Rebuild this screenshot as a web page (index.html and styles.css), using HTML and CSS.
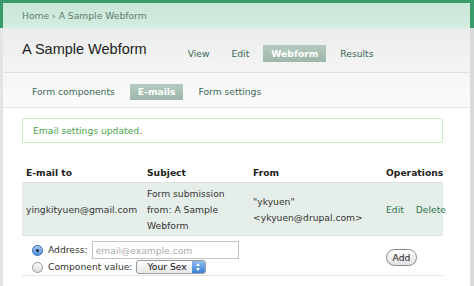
FILE: index.html
```html
<!DOCTYPE html>
<html lang="en">
<head>
  <meta charset="UTF-8">
  <title>A Sample Webform - E-mails</title>
  <link rel="stylesheet" href="styles.css">
</head>
<body>
  <div class="top">
    <div class="breadcrumb"><a href="#">Home</a> › <a href="#">A Sample Webform</a></div>
  </div>
  <div class="main">
    <div class="header">
      <h1>A Sample Webform</h1>
      <ul class="tabs">
        <li><a href="#">View</a></li>
        <li><a href="#">Edit</a></li>
        <li class="active"><a href="#">Webform</a></li>
        <li><a href="#">Results</a></li>
      </ul>
    </div>
    <ul class="tabs sub-tabs">
      <li><a href="#">Form components</a></li>
      <li class="active"><a href="#">E-mails</a></li>
      <li><a href="#">Form settings</a></li>
    </ul>
    <div class="content">
      <div class="message">Email settings updated.</div>
      <table class="emails">
        <colgroup>
          <col class="c-to">
          <col class="c-subject">
          <col class="c-from">
          <col class="c-ops">
        </colgroup>
        <thead>
          <tr>
            <th>E-mail to</th>
            <th>Subject</th>
            <th>From</th>
            <th>Operations</th>
          </tr>
        </thead>
        <tbody>
          <tr class="odd">
            <td>yingkityuen@gmail.com</td>
            <td>Form submission from: A Sample Webform</td>
            <td>"ykyuen" &lt;ykyuen@drupal.com&gt;</td>
            <td><a href="#" class="op">Edit</a><a href="#">Delete</a></td>
          </tr>
          <tr class="add-row">
            <td colspan="3">
              <label class="choice"><span class="radio checked"></span>Address: <input type="text" placeholder="email@example.com"></label>
              <label class="choice"><span class="radio"></span>Component value: <span class="select">Your Sex<span class="arrows"></span></span></label>
            </td>
            <td><button type="button" class="add-button">Add</button></td>
          </tr>
        </tbody>
      </table>
    </div>
  </div>
</body>
</html>
```
FILE: styles.css
```css
/* Fond général et typo de base */
body {
  margin: 0;
  font-family: "DejaVu Sans", Verdana, sans-serif;
  font-size: 9.2px;
  color: #333;
  background: #fff;
}
a {
  text-decoration: none;
}
.top {
  background: #3b9a6b;
  padding: 3px 4px 0 3px;
}
.breadcrumb {
  height: 25px;
  line-height: 25px;
  padding-left: 19px;
  background: linear-gradient(#c8e7d7, #d3ede0);
  font-size: 9.2px;
  color: #5d7f6f;
}
.breadcrumb a {
  color: #5d7f6f;
}
.main {
  border-left: 3px solid #e3e5e4;
  border-right: 4px solid #d9dbda;
  min-height: 258px;
}
.header {
  display: flex;
  align-items: flex-end;
  height: 45px;
  box-sizing: border-box;
  padding: 0 0 10px 19px;
  border-bottom: 1px solid #e0e2e1;
  background: linear-gradient(#eaeceb, #f4f5f4);
}
.header h1 {
  margin: 0 0 4px 0;
  font-family: "Liberation Sans", Arial, sans-serif;
  font-size: 14.5px;
  line-height: 18px;
  font-weight: normal;
  color: #222;
}
.tabs {
  display: flex;
  gap: 6px;
  margin: 0 0 0 33px;
  padding: 0;
  list-style: none;
}
.tabs a {
  display: block;
  padding: 0 8px;
  line-height: 17px;
  color: #3b6656;
}
.tabs .active a {
  background: linear-gradient(#b6cbbf, #9db6a9);
  color: #fff;
  font-weight: bold;
}
.sub-tabs {
  margin: 0;
  padding: 11px 0 7px 21px;
  gap: 7px;
  border-bottom: 1px solid #e3e5e4;
  background: linear-gradient(#f5f6f5, #fbfbfb);
}
.sub-tabs a {
  line-height: 16px;
}
.content {
  padding: 10px 27px 0 19px;
}
.message {
  border: 1px solid #cdeecd;
  padding: 0 10px;
  line-height: 23px;
  color: #4ba54b;
}
.emails {
  width: 421px;
  margin-top: 19px;
  border-collapse: collapse;
  table-layout: fixed;
}
.c-to { width: 121px; }
.c-subject { width: 106px; }
.c-from { width: 133px; }
.c-ops { width: 61px; }
.emails th {
  text-align: left;
  height: 20px;
  padding: 0 4px;
  border-bottom: 1px solid #dbe3df;
  color: #222;
}
.emails td {
  padding: 3px 4px 1px;
  line-height: 16px;
  vertical-align: middle;
}
.emails tr.odd td {
  background: #e6eeea;
  border-bottom: 1px solid #dbe3df;
}
.emails td a {
  color: #2f7650;
}
.emails a.op {
  margin-right: 12px;
}
.add-row td {
  padding: 5px 4px 0 10px;
  border-bottom: 1px solid #e0e4e2;
}
.add-row td:last-child {
  padding: 4px 4px 0;
}
.choice {
  display: flex;
  align-items: center;
  color: #333;
}
.choice input {
  width: 147px;
  height: 18px;
  box-sizing: border-box;
  margin: 0 0 0 4px;
  padding: 0 3px;
  border: 1px solid #c2c2c2;
  font-family: inherit;
  font-size: 9.2px;
  color: #333;
}
.choice input::placeholder {
  color: #aaa;
}
.radio {
  display: inline-block;
  width: 9px;
  height: 9px;
  margin-right: 5px;
  border: 1px solid #999;
  border-radius: 50%;
  background: linear-gradient(#fafafa, #dcdcdc);
}
.radio.checked {
  position: relative;
  border-color: #3c68a8;
  background: linear-gradient(#a9cdf5, #4d8ee0);
}
.radio.checked::after {
  content: "";
  position: absolute;
  left: 3px;
  top: 3px;
  width: 3px;
  height: 3px;
  border-radius: 50%;
  background: #1d2b3c;
}
.select {
  position: relative;
  display: inline-block;
  width: 70px;
  height: 14px;
  box-sizing: border-box;
  margin-left: 4px;
  padding-left: 10px;
  border: 1px solid #999;
  border-radius: 3px;
  background: linear-gradient(#fff, #e8e8e8);
  line-height: 12px;
  color: #111;
}
.arrows {
  position: absolute;
  right: 0;
  top: 0;
  width: 13px;
  height: 12px;
  border-radius: 0 2px 2px 0;
  background: linear-gradient(#8fbdf0, #3d7fd8);
}
.arrows::before,
.arrows::after {
  content: "";
  position: absolute;
  left: 4px;
  border-left: 2.5px solid transparent;
  border-right: 2.5px solid transparent;
}
.arrows::before {
  top: 2px;
  border-bottom: 3px solid #fff;
}
.arrows::after {
  bottom: 2px;
  border-top: 3px solid #fff;
}
.add-button {
  height: 17px;
  width: 31px;
  padding: 0;
  border: 1px solid #888;
  border-radius: 9px;
  background: linear-gradient(#fff, #e2e2e2);
  font-family: inherit;
  font-size: 9.2px;
  color: #222;
}
```
